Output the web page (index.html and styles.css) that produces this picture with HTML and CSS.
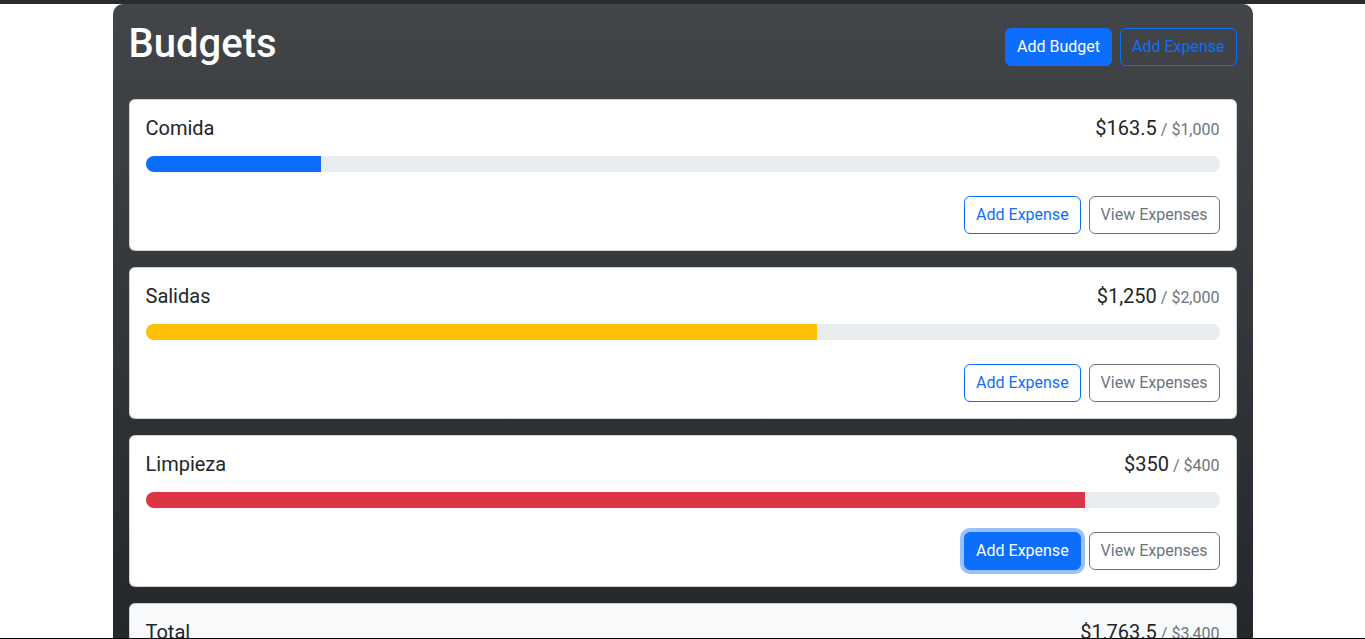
FILE: index.html
```html
<!DOCTYPE html>
<html lang="es">
<head>
<meta charset="utf-8">
<title>Budgets</title>
<link rel="stylesheet" href="styles.css">
</head>
<body>
<div class="topbar"></div>
<main class="container">
  <header class="header">
    <h1 class="title">Budgets</h1>
    <div class="actions">
      <button class="btn btn-primary">Add Budget</button>
      <button class="btn btn-outline-primary">Add Expense</button>
    </div>
  </header>
  <div class="cards">
    <section class="card">
      <div class="card-head">
        <span class="name">Comida</span>
        <span class="amount">$163.5<span class="max">/ $1,000</span></span>
      </div>
      <div class="progress"><div class="bar bar-blue" style="width:16.35%"></div></div>
      <div class="card-actions">
        <button class="btn btn-outline-primary">Add Expense</button>
        <button class="btn btn-outline-secondary">View Expenses</button>
      </div>
    </section>
    <section class="card">
      <div class="card-head">
        <span class="name">Salidas</span>
        <span class="amount">$1,250<span class="max">/ $2,000</span></span>
      </div>
      <div class="progress"><div class="bar bar-yellow" style="width:62.5%"></div></div>
      <div class="card-actions">
        <button class="btn btn-outline-primary">Add Expense</button>
        <button class="btn btn-outline-secondary">View Expenses</button>
      </div>
    </section>
    <section class="card">
      <div class="card-head">
        <span class="name">Limpieza</span>
        <span class="amount">$350<span class="max">/ $400</span></span>
      </div>
      <div class="progress"><div class="bar bar-red" style="width:87.5%"></div></div>
      <div class="card-actions">
        <button class="btn btn-primary btn-focus">Add Expense</button>
        <button class="btn btn-outline-secondary">View Expenses</button>
      </div>
    </section>
    <section class="card card-light">
      <div class="card-head">
        <span class="name">Total</span>
        <span class="amount">$1,763.5<span class="max">/ $3,400</span></span>
      </div>
    </section>
  </div>
</main>
<div class="bottom-line"></div>
</body>
</html>
```

FILE: styles.css
```css
* { box-sizing: border-box; }
html, body {
  margin: 0;
  padding: 0;
  background: #fff;
  font-family: Roboto, "Liberation Sans", sans-serif;
  color: #212529;
  font-size: 16px;
  line-height: 1.5;
}
.topbar {
  height: 4px;
  background: #2b2b2b;
}
.container {
  width: 1140px;
  margin: 0 auto;
  padding: 16px 16px 16px;
  border-radius: 10px 10px 0 0;
  background: #212529 linear-gradient(180deg, rgba(255,255,255,0.15), rgba(255,255,255,0));
}
.header {
  display: flex;
  justify-content: space-between;
  align-items: flex-start;
  height: 79px;
}
.title {
  margin: 0;
  font-size: 40px;
  line-height: 48px;
  font-weight: 500;
  color: #fff;
}
.actions {
  display: flex;
  gap: 8px;
  margin-top: 8px;
}
.btn {
  font-family: inherit;
  font-size: 16px;
  line-height: 24px;
  padding: 6px 11px;
  border: 1px solid transparent;
  border-radius: 6px;
  background: transparent;
  cursor: pointer;
}
.btn-primary {
  background: #0d6efd;
  border-color: #0d6efd;
  color: #fff;
}
.btn-outline-primary {
  color: #0d6efd;
  border-color: #0d6efd;
}
.btn-outline-secondary {
  color: #6c757d;
  border-color: #6c757d;
}
.btn-focus {
  box-shadow: 0 0 0 4px rgba(49, 132, 253, 0.5);
}
.cards {
  display: flex;
  flex-direction: column;
  gap: 16px;
}
.card {
  background: #fff;
  border: 1px solid rgba(0,0,0,0.175);
  border-radius: 6px;
  padding: 16px;
}
.card-light {
  background: #f8f9fa;
}
.card-head {
  display: flex;
  justify-content: space-between;
  align-items: baseline;
  height: 24px;
  margin-bottom: 16px;
}
.name {
  font-size: 20px;
  line-height: 24px;
  font-weight: 400;
}
.amount {
  font-size: 20px;
  line-height: 24px;
}
.max {
  font-size: 16px;
  color: #6c757d;
  margin-left: 4px;
}
.progress {
  height: 16px;
  background: #e9ecef;
  border-radius: 8px;
  overflow: hidden;
  display: flex;
}
.bar { height: 100%; }
.bar-blue { background: #0d6efd; }
.bar-yellow { background: #ffc107; }
.bar-red { background: #dc3545; }
.card-actions {
  display: flex;
  justify-content: flex-end;
  gap: 8px;
  margin-top: 24px;
}
.bottom-line {
  position: fixed;
  left: 0;
  right: 0;
  bottom: 0;
  height: 1px;
  background: #000;
}
```
